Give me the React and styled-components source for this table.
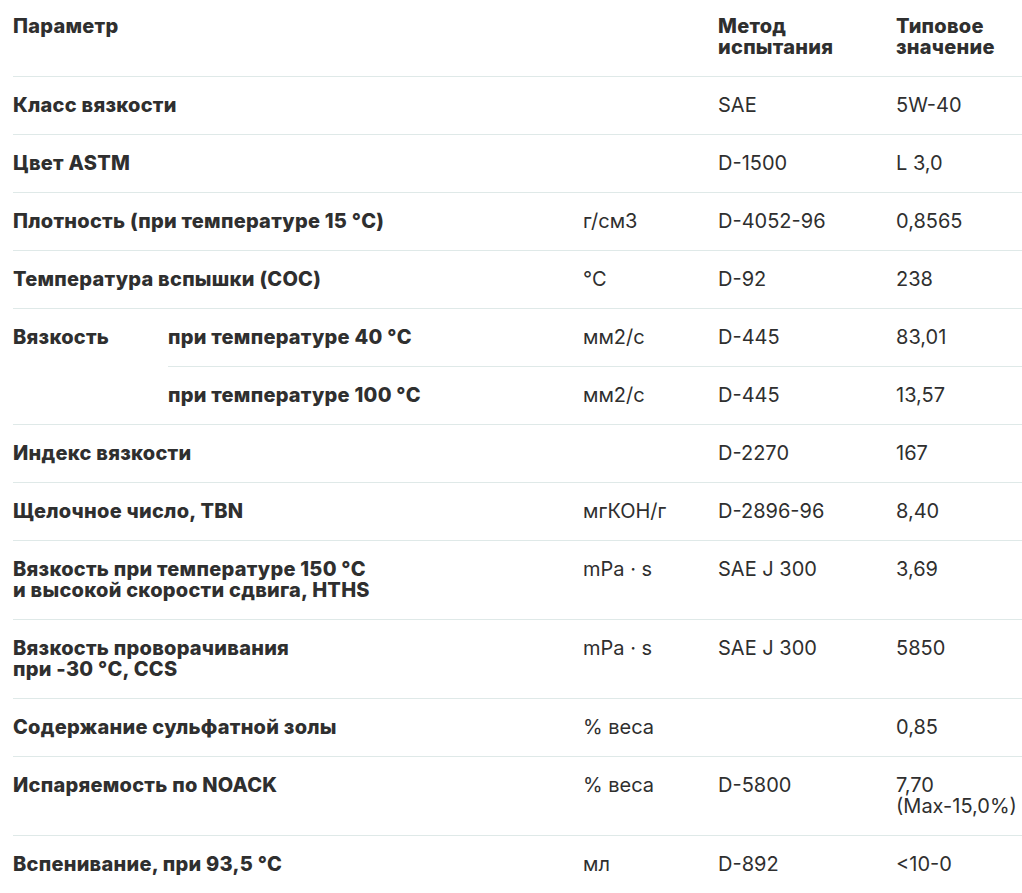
import React from 'react';
import styled, { createGlobalStyle } from 'styled-components';

const GlobalStyle = createGlobalStyle`
  html, body {
    margin: 0;
    padding: 0;
    background: #fff;
  }
  body {
    font-family: Inter, "Noto Sans", sans-serif;
    color: #2f2f2f;
    overflow: hidden;
  }
`;

const Table = styled.table`
  margin-left: 13px;
  width: 1009px;
  table-layout: fixed;
  border-collapse: collapse;
  font-size: 20px;
  line-height: 21px;
`;

const HeadCell = styled.th`
  text-align: left;
  vertical-align: top;
  font-weight: 800;
  letter-spacing: 0.25px;
  padding: 16px 0 18px 0;
`;

const Cell = styled.td`
  vertical-align: top;
  padding: 18px 0 18px 0;
  border-top: 1px solid #dfe9e8;
  font-weight: ${(p) => (p.$bold ? 800 : 400)};
  letter-spacing: ${(p) => (p.$bold ? '0.25px' : '0')};
`;

const rows = [
  { name: 'Класс вязкости', unit: '', method: 'SAE', value: '5W-40' },
  { name: 'Цвет ASTM', unit: '', method: 'D-1500', value: 'L 3,0' },
  { name: 'Плотность (при температуре 15 °C)', unit: 'г/см3', method: 'D-4052-96', value: '0,8565' },
  { name: 'Температура вспышки (COC)', unit: '°C', method: 'D-92', value: '238' },
];

const rowsAfter = [
  { name: 'Индекс вязкости', unit: '', method: 'D-2270', value: '167' },
  { name: 'Щелочное число, TBN', unit: 'мгКОН/г', method: 'D-2896-96', value: '8,40' },
  { name: ['Вязкость при температуре 150 °C', 'и высокой скорости сдвига, HTHS'], unit: 'mPa · s', method: 'SAE J 300', value: '3,69' },
  { name: ['Вязкость проворачивания', 'при -30 °C, CCS'], unit: 'mPa · s', method: 'SAE J 300', value: '5850' },
  { name: 'Содержание сульфатной золы', unit: '% веса', method: '', value: '0,85' },
  { name: 'Испаряемость по NOACK', unit: '% веса', method: 'D-5800', value: ['7,70', '(Max-15,0%)'] },
  { name: 'Вспенивание, при 93,5 °C', unit: 'мл', method: 'D-892', value: '<10-0' },
];

const lines = (text) =>
  Array.isArray(text)
    ? text.map((line, i) => (
        <React.Fragment key={i}>
          {i > 0 && <br />}
          {line}
        </React.Fragment>
      ))
    : text;

const Row = ({ row }) => (
  <tr>
    <Cell $bold colSpan={2}>{lines(row.name)}</Cell>
    <Cell>{row.unit}</Cell>
    <Cell>{row.method}</Cell>
    <Cell>{lines(row.value)}</Cell>
  </tr>
);

const App = () => (
  <>
    <GlobalStyle />
    <Table>
      <colgroup>
        <col style={{ width: 155 }} />
        <col style={{ width: 415 }} />
        <col style={{ width: 135 }} />
        <col style={{ width: 178 }} />
        <col style={{ width: 126 }} />
      </colgroup>
      <thead>
        <tr>
          <HeadCell colSpan={2}>Параметр</HeadCell>
          <HeadCell />
          <HeadCell>Метод<br />испытания</HeadCell>
          <HeadCell>Типовое<br />значение</HeadCell>
        </tr>
      </thead>
      <tbody>
        {rows.map((r, i) => (
          <Row key={i} row={r} />
        ))}
        <tr>
          <Cell $bold rowSpan={2}>Вязкость</Cell>
          <Cell $bold>при температуре 40 °C</Cell>
          <Cell>мм2/с</Cell>
          <Cell>D-445</Cell>
          <Cell>83,01</Cell>
        </tr>
        <tr>
          <Cell $bold>при температуре 100 °C</Cell>
          <Cell>мм2/с</Cell>
          <Cell>D-445</Cell>
          <Cell>13,57</Cell>
        </tr>
        {rowsAfter.map((r, i) => (
          <Row key={i} row={r} />
        ))}
      </tbody>
    </Table>
  </>
);

export default App;
